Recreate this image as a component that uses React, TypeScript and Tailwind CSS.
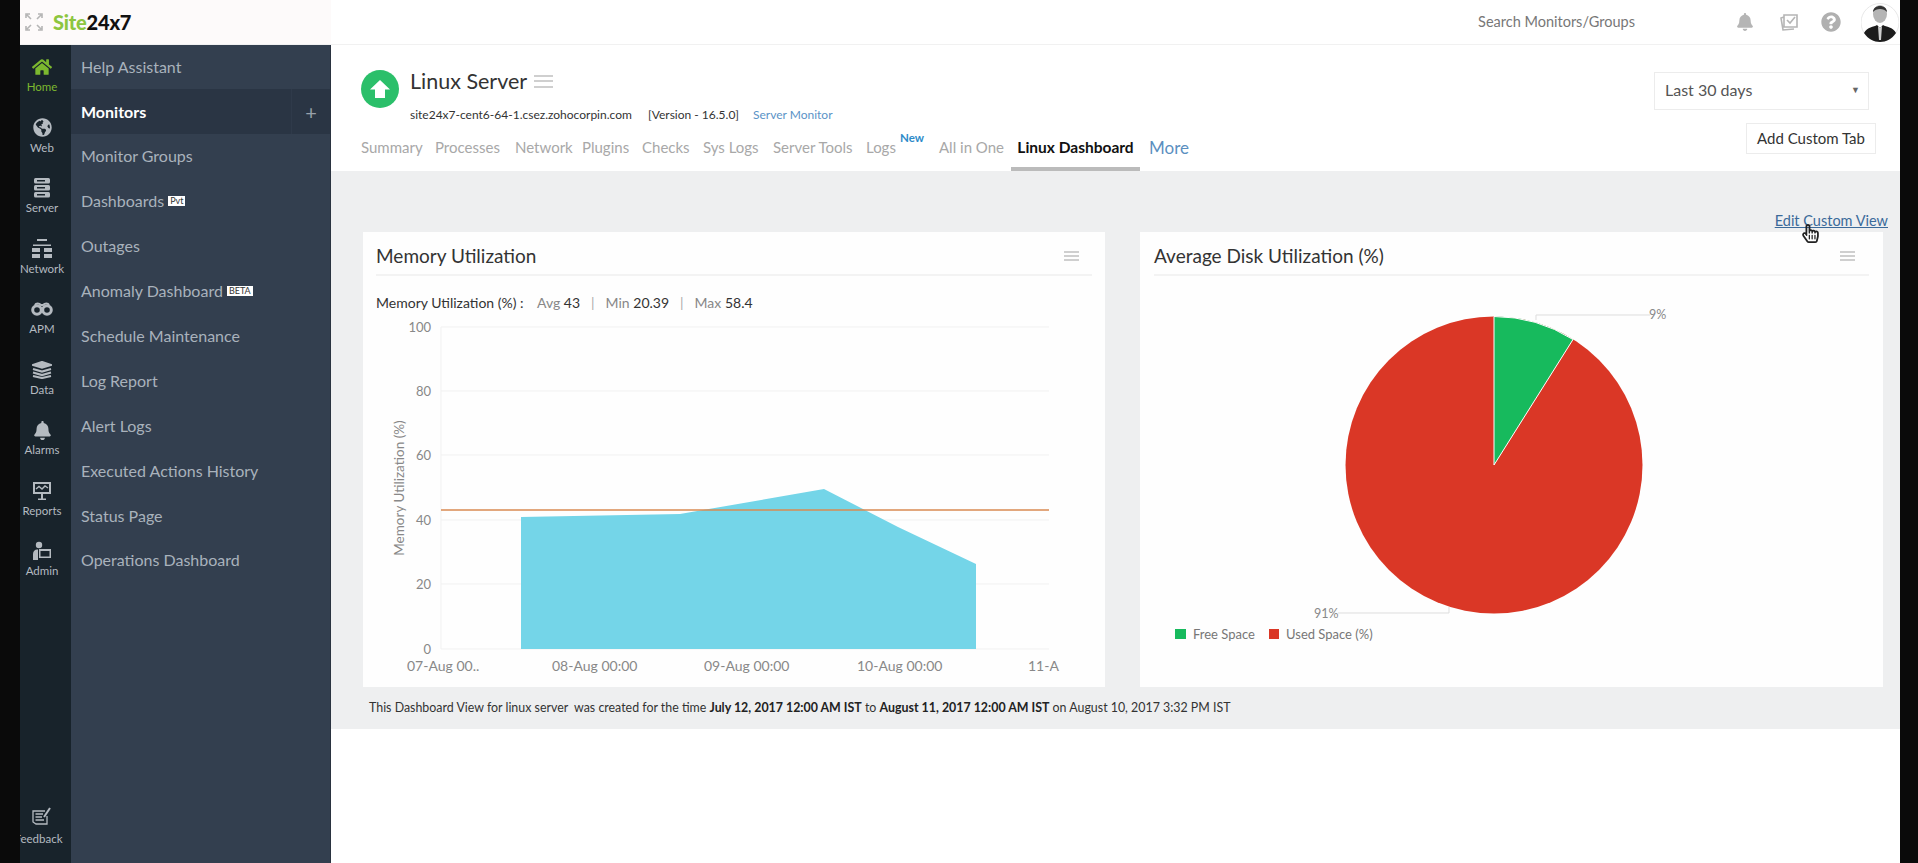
import { FaHome, FaGlobeAmericas, FaBell, FaRegHandPointer, FaQuestionCircle } from 'react-icons/fa'

const font = 'font-["Lato","Open_Sans",sans-serif]'

function ServerIcon() {
  return (
    <svg width="18" height="20" viewBox="0 0 18 20" fill="currentColor">
      <rect x="1" y="0" width="16" height="5.5" rx="1.5" />
      <rect x="1" y="7" width="16" height="5.5" rx="1.5" />
      <rect x="1" y="14" width="16" height="5.5" rx="1.5" />
      <rect x="4" y="2" width="8" height="1.5" fill="#18232b" />
      <rect x="4" y="9" width="8" height="1.5" fill="#18232b" />
      <rect x="4" y="16" width="8" height="1.5" fill="#18232b" />
    </svg>
  )
}

function NetworkIcon() {
  return (
    <svg width="20" height="20" viewBox="0 0 20 20" fill="currentColor">
      <rect x="5" y="0" width="10" height="2" />
      <rect x="1" y="5.5" width="18" height="1.5" />
      <rect x="0" y="9" width="8" height="4" />
      <rect x="12" y="9" width="8" height="4" />
      <rect x="0" y="15" width="8" height="4" />
      <rect x="12" y="15" width="8" height="4" />
    </svg>
  )
}

function BinocularsIcon() {
  return (
    <svg width="22" height="14" viewBox="0 0 22 14" fill="none" stroke="currentColor" strokeWidth="3">
      <circle cx="6" cy="8" r="4.3" />
      <circle cx="16" cy="8" r="4.3" />
      <path d="M4 3 C5 1 8 1 10 3 H12 C14 1 17 1 18 3" strokeWidth="2" />
    </svg>
  )
}

function DataIcon() {
  return (
    <svg width="20" height="18" viewBox="0 0 20 18" fill="none" stroke="currentColor" strokeWidth="2.2">
      <path d="M1 4 L10 1 L19 4 L10 6.5 Z" fill="currentColor" />
      <path d="M1 8 L10 10.5 L19 8" />
      <path d="M1 11.5 L10 14 L19 11.5" />
      <path d="M1 15 L10 17 L19 15" />
    </svg>
  )
}

function ReportsIcon() {
  return (
    <svg width="20" height="20" viewBox="0 0 20 20" fill="currentColor">
      <path d="M1 1 H19 V13 H1 Z M3 3 V11 H17 V3 Z" fillRule="evenodd" />
      <path d="M4 8 L7 5.5 L10 8 L13 5 L16 7" fill="none" stroke="currentColor" strokeWidth="1.4" />
      <rect x="9" y="13" width="2" height="5" />
      <rect x="6" y="17.5" width="8" height="1.5" />
    </svg>
  )
}

function AdminIcon() {
  return (
    <svg width="20" height="20" viewBox="0 0 20 20" fill="currentColor">
      <circle cx="7" cy="4" r="3.2" />
      <path d="M1 19 V13 C1 10 3 8.5 5 8.5 H6 V19 Z" />
      <path d="M7 8 H19 V17 H7 Z M8.5 10 V15.5 H17.5 V10 Z" fillRule="evenodd" />
    </svg>
  )
}

function FeedbackIcon() {
  return (
    <svg width="20" height="20" viewBox="0 0 20 20" fill="none" stroke="currentColor" strokeWidth="1.3">
      <path d="M13 4 H1 V15 L4 17 H15 V9" />
      <path d="M3.5 7 H11 M3.5 10 H10 M3.5 13 H12" />
      <path d="M12 10 L18 1" strokeWidth="2" />
    </svg>
  )
}

function UpArrowIcon() {
  return (
    <svg width="20" height="18" viewBox="0 0 20 18" fill="#fff">
      <path d="M10 0 L20 9.5 H15 V18 H5 V9.5 H0 Z" />
    </svg>
  )
}

function Hamburger({ className }: { className: string }) {
  return (
    <div className={`flex flex-col justify-between ${className}`}>
      <div className="h-[2px] bg-[#cfcfcf]" />
      <div className="h-[2px] bg-[#cfcfcf]" />
      <div className="h-[2px] bg-[#cfcfcf]" />
    </div>
  )
}

const railItems = [
  { label: 'Home', icon: <FaHome size={20} />, active: true },
  { label: 'Web', icon: <FaGlobeAmericas size={19} /> },
  { label: 'Server', icon: <ServerIcon /> },
  { label: 'Network', icon: <NetworkIcon /> },
  { label: 'APM', icon: <BinocularsIcon /> },
  { label: 'Data', icon: <DataIcon /> },
  { label: 'Alarms', icon: <FaBell size={19} /> },
  { label: 'Reports', icon: <ReportsIcon /> },
  { label: 'Admin', icon: <AdminIcon /> },
]

const menuItems = [
  'Help Assistant',
  'Monitors',
  'Monitor Groups',
  'Dashboards',
  'Outages',
  'Anomaly Dashboard',
  'Schedule Maintenance',
  'Log Report',
  'Alert Logs',
  'Executed Actions History',
  'Status Page',
  'Operations Dashboard',
]

const badges: Record<string, string> = {
  Dashboards: 'Pvt',
  'Anomaly Dashboard': 'BETA',
}

const tabs = [
  { label: 'Summary', w: 'w-[74px]' },
  { label: 'Processes', w: 'w-[80px]' },
  { label: 'Network', w: 'w-[67px]' },
  { label: 'Plugins', w: 'w-[60px]' },
  { label: 'Checks', w: 'w-[61px]' },
  { label: 'Sys Logs', w: 'w-[70px]' },
  { label: 'Server Tools', w: 'w-[93px]' },
]

function MemoryChart() {
  const gridY = [327, 391, 455, 520, 584, 649]
  const yLabels = ['100', '80', '60', '40', '20', '0']
  const xLabels = [
    { x: 407, t: '07-Aug 00..' },
    { x: 552, t: '08-Aug 00:00' },
    { x: 704, t: '09-Aug 00:00' },
    { x: 857, t: '10-Aug 00:00' },
    { x: 1028, t: '11-A' },
  ]
  return (
    <svg className="block" width="742" height="372" viewBox="363 315 742 372">
      {gridY.map((y) => (
        <line key={y} x1="441" x2="1049" y1={y} y2={y} stroke="#f1f1f1" strokeWidth="1" />
      ))}
      <line x1="441" x2="441" y1="327" y2="649" stroke="#f1f1f1" strokeWidth="1" />
      <path d="M521 517 L680 514 L824 489 L898 527 L976 564 L976 649 L521 649 Z" fill="#74d5e8" />
      <line x1="441" x2="1049" y1="510" y2="510" stroke="#d98a52" strokeWidth="1.5" />
      {yLabels.map((t, i) => (
        <text key={t} x="431" y={gridY[i] + 5} textAnchor="end" fontSize="13" fill="#888" fontFamily="Lato, sans-serif">
          {t}
        </text>
      ))}
      {xLabels.map((l) => (
        <text key={l.t} x={l.x} y="671" fontSize="14" fill="#888" fontFamily="Lato, sans-serif">
          {l.t}
        </text>
      ))}
      <text
        transform="translate(404 488) rotate(-90)"
        textAnchor="middle"
        fontSize="13.5"
        fill="#888"
        fontFamily="Lato, sans-serif"
      >
        Memory Utilization (%)
      </text>
    </svg>
  )
}

function DiskPie() {
  return (
    <svg className="block" width="743" height="411" viewBox="1140 276 743 411">
      <circle cx="1494" cy="465" r="148.5" fill="#da3726" />
      <path d="M1494 465 L1494 316.5 A148.5 148.5 0 0 1 1573 339.5 Z" fill="#17ba5d" stroke="#fff" strokeWidth="1" />
      <path d="M1536 320 V315 H1650" fill="none" stroke="#dddddd" strokeWidth="1" />
      <path d="M1449 607 V613 H1338" fill="none" stroke="#dddddd" strokeWidth="1" />
      <text x="1649" y="319" fontSize="12.5" fill="#888" fontFamily="Lato, sans-serif">9%</text>
      <text x="1314" y="618" fontSize="12.5" fill="#888" fontFamily="Lato, sans-serif">91%</text>
      <rect x="1175" y="629" width="11" height="10" fill="#17ba5d" />
      <text x="1193" y="639" fontSize="13" fill="#777" fontFamily="Lato, sans-serif">Free Space</text>
      <rect x="1269" y="629" width="10" height="10" fill="#da3726" />
      <text x="1286" y="639" fontSize="13" fill="#777" fontFamily="Lato, sans-serif">Used Space (%)</text>
    </svg>
  )
}

function Avatar() {
  return (
    <svg width="38" height="39" viewBox="0 0 38 39">
      <circle cx="19" cy="19.5" r="19" fill="#fff" stroke="#e8e8e8" />
      <ellipse cx="19" cy="11" rx="7" ry="9" fill="#b5b5b5" />
      <path d="M12 9 C12 1 26 1 26 9 C23 5 15 5 12 9 Z" fill="#333" />
      <path d="M3 30 C6 24 13 24 16 22 L19 25 L22 22 C25 24 32 24 35 30 C31 36 25 39 19 39 C13 39 7 36 3 30 Z" fill="#1c1c1c" />
      <path d="M17 23 L19 25 L21 23 L20 37 H18 Z" fill="#cfcfcf" />
    </svg>
  )
}

export default function App() {
  return (
    <div className={`flex h-[863px] w-[1918px] overflow-hidden bg-[#0a0a0a] ${font}`}>
      <div className="w-5 shrink-0" />

      <div className="relative flex h-full w-[1880px] flex-col bg-white">
        {/* top bar */}
        <div className="flex h-[45px] shrink-0 border-b border-[#f1f1f1]">
          <div className="flex w-[311px] items-center bg-[#fdfafa] pl-[5px]">
            <svg width="18" height="18" viewBox="0 0 18 18" fill="none" stroke="#b5b5b5" strokeWidth="1.6">
              <path d="M1 5 V1 H5 M2 2 L6 6 M13 1 H17 V5 M16 2 L12 6 M1 13 V17 H5 M2 16 L6 12 M13 17 H17 V13 M16 16 L12 12" />
            </svg>
            <span className="ml-[10px] text-[20px] leading-none font-black tracking-[-0.2px]">
              <span className="text-[#8dc63f]">Site</span>
              <span className="text-[#111]">24x7</span>
            </span>
          </div>
          <div className="flex flex-1 items-center justify-end pr-[1px]">
            <span className="mr-[101px] text-[14.5px] text-[#777]">Search Monitors/Groups</span>
            <span className="mr-[25px] text-[#b5b5b5]">
              <FaBell size={18} />
            </span>
            <svg className="mr-[22px]" width="20" height="20" viewBox="0 0 20 20" fill="none" stroke="#b5b5b5" strokeWidth="1.6">
              <path d="M5 3 H18 V15 H5 Z M5 5 L2 6 L4 18 L15 17" />
              <path d="M8 8 L11 11 L16 5" />
            </svg>
            <span className="mr-[20px] text-[#b0b0b0]">
              <FaQuestionCircle size={20} />
            </span>
            <Avatar />
          </div>
        </div>

        <div className="flex min-h-0 flex-1">
          {/* icon rail */}
          <div className="flex w-[51px] shrink-0 flex-col overflow-hidden bg-[#18232b] pt-[11px] pr-[7px]">
            {railItems.map((item) => (
              <div
                key={item.label}
                className={`flex h-[60.5px] shrink-0 flex-col items-center ${item.active ? 'text-[#7cb82f]' : 'text-[#b4bac0]'}`}
              >
                <div className="flex h-[22px] items-center">{item.icon}</div>
                <span className="mt-[2px] text-[11.5px] leading-[14px]">{item.label}</span>
              </div>
            ))}
            <div className="mt-auto mb-[17px] flex flex-col items-center text-[#b4bac0]">
              <FeedbackIcon />
              <span className="mt-[5px] -ml-[7px] text-[11.5px] leading-[14px] whitespace-nowrap">Feedback</span>
            </div>
          </div>

          {/* menu */}
          <div className="flex w-[260px] shrink-0 flex-col border-r border-[#2a3340] bg-[#333f4f]">
            {menuItems.map((name, i) =>
              name === 'Monitors' ? (
                <div key={name} className="flex h-[45px] shrink-0 items-center bg-[#2a3544] pl-[10px]">
                  <span className="flex-1 text-[16px] font-bold text-white">{name}</span>
                  <span className="flex h-full w-[39px] items-center justify-center border-l border-[#2f3a4a] text-[20px] text-[#98a1ab]">
                    +
                  </span>
                </div>
              ) : (
                <div
                  key={name}
                  className={`flex shrink-0 items-center pl-[10px] text-[16px] text-[#a9b2bc] ${i === 0 ? 'h-[44px]' : 'h-[44.9px]'}`}
                >
                  {name}
                  {badges[name] && (
                    <span className="ml-[4px] bg-white px-[2px] text-[9px] leading-[10px] text-[#333]">{badges[name]}</span>
                  )}
                </div>
              ),
            )}
          </div>

          {/* main */}
          <div className="flex min-w-0 flex-1 flex-col">
            <div className="flex h-[126px] shrink-0 justify-between pl-[30px]">
              <div className="flex flex-col">
                <div className="mt-[25px] flex">
                  <div className="flex h-[38px] w-[38px] items-center justify-center rounded-full bg-[#2bbf6a]">
                    <UpArrowIcon />
                  </div>
                  <div className="-mt-[2px] ml-[11px]">
                    <div className="flex items-center">
                      <span className="text-[21.5px] leading-[26px] text-[#333]">Linux Server</span>
                      <Hamburger className="ml-[7px] h-[13px] w-[19px]" />
                    </div>
                    <div className="mt-[13px] flex text-[12px] leading-[16px] text-[#333]">
                      <span className="w-[238px]">site24x7-cent6-64-1.csez.zohocorpin.com</span>
                      <span className="w-[105px]">[Version - 16.5.0]</span>
                      <span className="text-[#5b93c7]">Server Monitor</span>
                    </div>
                  </div>
                </div>
                <div className="mt-[13px] flex h-[35px] items-start pt-[2px] text-[15px] leading-[18px] text-[#a8a8a8]">
                  {tabs.map((t) => (
                    <span key={t.label} className={`${t.w} shrink-0`}>
                      {t.label}
                    </span>
                  ))}
                  <span className="relative w-[73px] shrink-0">
                    Logs
                    <span className="absolute -top-[9px] left-[34px] text-[11.5px] font-bold text-[#2e8bc9]">New</span>
                  </span>
                  <span className="w-[72px] shrink-0">All in One</span>
                  <div className="-mt-[2px] flex h-[35px] w-[129px] shrink-0 justify-center border-b-4 border-[#bbbbbb] pt-[2px] text-[15.5px] font-bold text-[#111]">
                    Linux Dashboard
                  </div>
                  <span className="mt-[1px] ml-[9px] text-[17px] text-[#5b8fbf]">More</span>
                </div>
              </div>
              <div className="flex flex-col items-end pt-[27px] pr-[24px]">
                <div className="mr-[7px] flex h-[38px] w-[215px] items-center justify-between border border-[#ececec] pr-[8px] pb-[2px] pl-[10px] text-[16px] text-[#555]">
                  Last 30 days
                  <span className="text-[9px] text-[#666]">▼</span>
                </div>
                <div className="mt-[13px] flex h-[31px] w-[130px] items-center justify-center border border-[#ececec] text-[15px] text-[#333]">
                  Add Custom Tab
                </div>
              </div>
            </div>

            <div className="flex h-[558px] shrink-0 flex-col bg-[#eeeff0]">
              <div className="flex h-[61px] shrink-0 items-end justify-end pr-[12px] pb-[3px]">
                <span className="text-[14.5px] leading-[17px] text-[#3b6a9a] underline">Edit Custom View</span>
              </div>
              <div className="flex h-[455px] shrink-0 gap-[35px] pl-[32px]">
                <div className="w-[742px] bg-[#fefefe]">
                  <div className="mx-[13px] flex h-[44px] items-center justify-between border-b-2 border-[#f3f3f3] pt-[6px] pr-[13px]">
                    <span className="text-[19px] text-[#333]">Memory Utilization</span>
                    <Hamburger className="h-[10px] w-[15px]" />
                  </div>
                  <div className="mx-[13px] flex h-[39px] items-center pt-[15px] text-[14px] leading-none whitespace-nowrap text-[#888]">
                    <span className="w-[161px] text-[#333]">Memory Utilization (%) :</span>
                    <span>
                      Avg <span className="text-[#333]">43</span>
                    </span>
                    <span className="mx-[11px] text-[#aaa]">|</span>
                    <span>
                      Min <span className="text-[#333]">20.39</span>
                    </span>
                    <span className="mx-[11px] text-[#aaa]">|</span>
                    <span>
                      Max <span className="text-[#333]">58.4</span>
                    </span>
                  </div>
                  <MemoryChart />
                </div>
                <div className="w-[743px] bg-[#fefefe]">
                  <div className="mx-[14px] flex h-[44px] items-center justify-between border-b-2 border-[#f3f3f3] pt-[6px] pr-[14px]">
                    <span className="text-[19px] text-[#333]">Average Disk Utilization (%)</span>
                    <Hamburger className="h-[10px] w-[15px]" />
                  </div>
                  <DiskPie />
                </div>
              </div>
              <div className="flex h-[42px] items-center pl-[38px] text-[12.4px] whitespace-pre text-[#333]">
                This Dashboard View for linux server  was created for the time{' '}
                <b className="text-[#222]">July 12, 2017 12:00 AM IST</b> to{' '}
                <b className="text-[#222]">August 11, 2017 12:00 AM IST</b> on August 10, 2017 3:32 PM IST
              </div>
            </div>
          </div>
        </div>

        {/* mouse pointer over the link */}
        <span className="absolute top-[224px] left-[1781px] text-[#222]">
          <FaRegHandPointer size={19} />
        </span>
      </div>
    </div>
  )
}
